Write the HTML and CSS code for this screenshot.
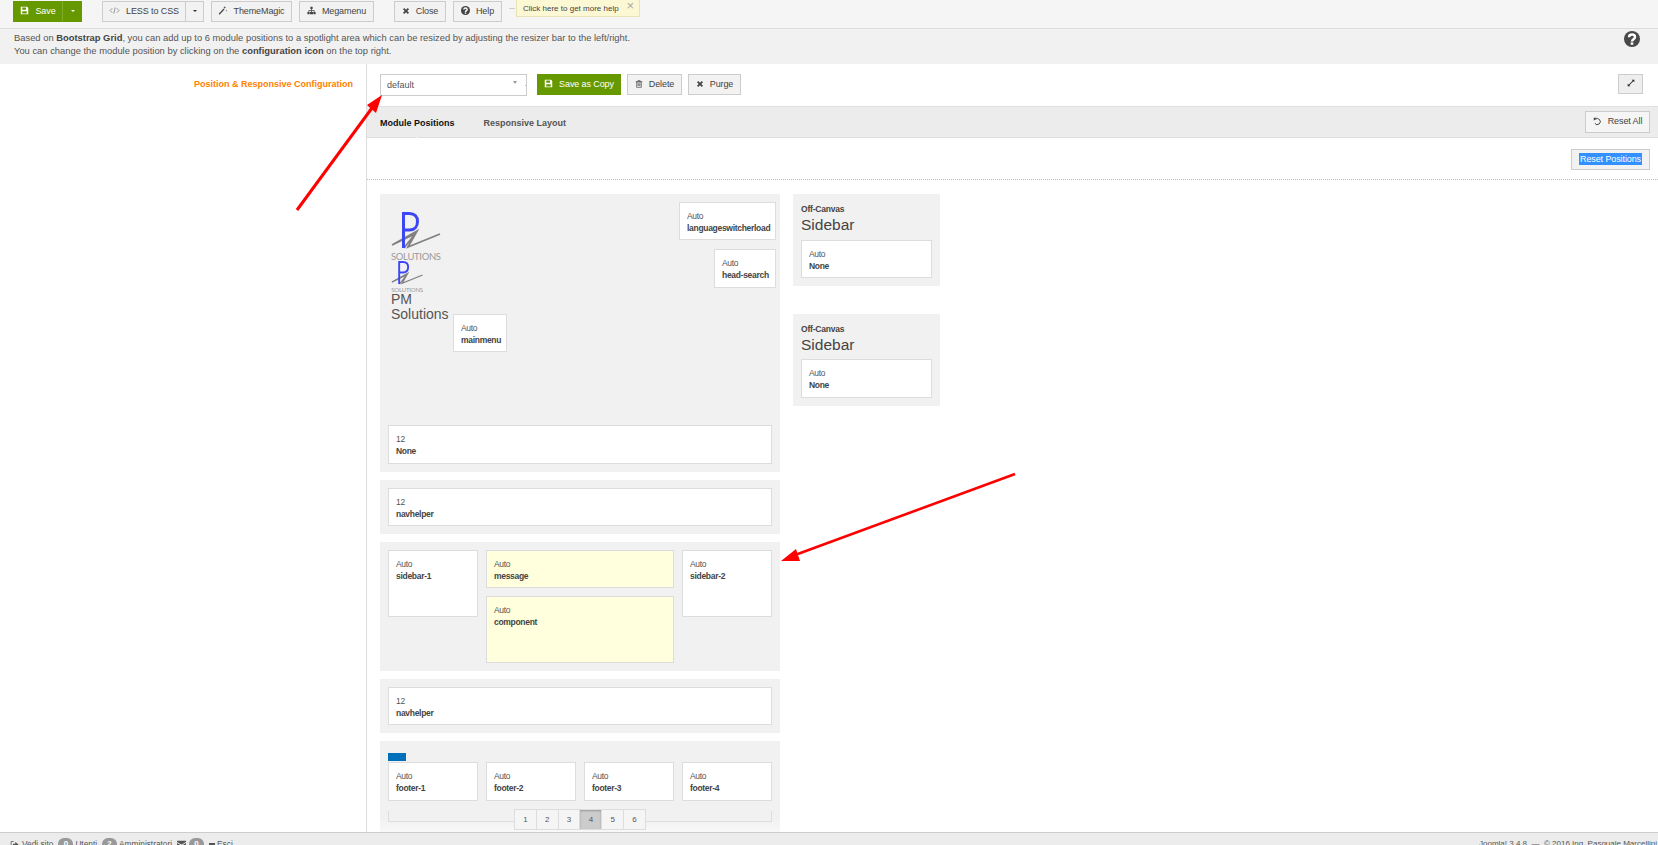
FILE: index.html
```html
<!DOCTYPE html>
<html lang="en">
<head>
<meta charset="utf-8">
<title>Template Layout</title>
<link rel="stylesheet" href="styles.css">
</head>
<body>
<svg class="defs" width="0" height="0" aria-hidden="true">
  <symbol id="i-save" viewBox="0 0 12 12"><path fill="currentColor" fill-rule="evenodd" d="M1 1h8.5L11 2.5V11H1zM3 2v3h5V2zM3 7v3h6V7z"/></symbol>
  <symbol id="i-code" viewBox="0 0 14 12"><path fill="none" stroke="currentColor" d="M4 3 1 6l3 3M10 3l3 3-3 3M8 2 6 10"/></symbol>
  <symbol id="i-wand" viewBox="0 0 12 12"><path fill="none" stroke="currentColor" stroke-width="1.6" d="M1.5 11 8 4"/><path fill="currentColor" d="M9 0l.5 1.5L11 2l-1.500.5L9 4l-.5-1.500L7 2l1.500-.5zM11 5l.3 1 .7.300-.7.300-.3 1-.3-1-.7-.3.7-.3z"/></symbol>
  <symbol id="i-map" viewBox="0 0 12 12"><path fill="currentColor" d="M4.500 1h3v3h-1v1.500H10V8h1.500v3h-3V8H9V6.500H6.500V8H8v3H4V8h1.500V6.500H3V8h.5v3h-3V8H2V5.500h3.500V4h-1z"/></symbol>
  <symbol id="i-x" viewBox="0 0 10 10"><path fill="none" stroke="currentColor" stroke-width="2.200" d="M2 2l6 6M8 2 2 8"/></symbol>
  <symbol id="i-help" viewBox="0 0 16 16"><circle cx="8" cy="8" r="8" fill="currentColor"/><path fill="none" stroke="#fff" stroke-width="2.400" d="M5 6.200C5 4.300 6.500 3.500 8 3.500c1.800 0 3 1 3 2.500 0 2.300-3 2.200-3 4.500"/><rect x="6.700" y="11.400" width="2.600" height="2.400" fill="#fff"/></symbol>
  <symbol id="i-trash" viewBox="0 0 10 12"><path fill="none" stroke="currentColor" d="M1.500 3h7v8h-7zM0 2.500h10M3.500 2.500v-2h3v2M3.500 5v4M5 5v4M6.500 5v4"/></symbol>
  <symbol id="i-expand" viewBox="0 0 12 12"><path fill="currentColor" d="M7 1h4v4L9.500 3.500 3.500 9.500 5 11H1V7l1.500 1.500 6-6z"/></symbol>
  <symbol id="i-undo" viewBox="0 0 12 12"><path fill="none" stroke="currentColor" stroke-width="1.300" d="M3 3.200A4 4 0 1 1 2.500 8.500"/><path fill="currentColor" d="M1 1h4L1 5z"/></symbol>
  <symbol id="i-out" viewBox="0 0 12 12"><path fill="none" stroke="currentColor" d="M5 2H1.500v8H5"/><path fill="currentColor" d="M4 5h3V2.500L11.500 6 7 9.500V7H4z"/></symbol>
  <symbol id="i-mail" viewBox="0 0 12 10"><path fill="currentColor" d="M0 0h12v1.500L6 5 0 1.500zM0 3l6 3.500L12 3v7H0z"/></symbol>
</svg>

<header class="topbar">
  <div class="btn-group">
    <button class="btn btn-green w-save"><svg class="ico"><use href="#i-save"/></svg>Save</button>
    <button class="btn btn-green w-caret"><span class="caret caret-white"></span></button>
  </div>
  <div class="btn-group g-less">
    <button class="btn w-less"><svg class="ico ico-wide"><use href="#i-code"/></svg>LESS to CSS</button>
    <button class="btn w-caret2"><span class="caret"></span></button>
  </div>
  <button class="btn w-magic g-tool"><svg class="ico"><use href="#i-wand"/></svg>ThemeMagic</button>
  <button class="btn w-mega g-tool"><svg class="ico"><use href="#i-map"/></svg>Megamenu</button>
  <button class="btn w-close g-close"><svg class="ico ico-sm"><use href="#i-x"/></svg>Close</button>
  <button class="btn w-help g-tool"><svg class="ico"><use href="#i-help"/></svg>Help</button>
  <div class="tip">Click here to get more help<span class="tip-x">×</span></div>
</header>

<section class="info">
  <div class="info-text">
    <p>Based on <b>Bootstrap Grid</b>, you can add up to 6 module positions to a spotlight area which can be resized by adjusting the resizer bar to the left/right.</p>
    <p>You can change the module position by clicking on the <b>configuration icon</b> on the top right.</p>
  </div>
  <svg class="info-help"><use href="#i-help"/></svg>
</section>

<main class="main">
  <aside class="side"><label class="side-label">Position &amp; Responsive Configuration</label></aside>
  <div class="content">
    <div class="row-actions">
      <div class="select">default<span class="select-arrow"></span><span class="select-dot"></span></div>
      <button class="btn btn-green w-copy"><svg class="ico"><use href="#i-save"/></svg>Save as Copy</button>
      <button class="btn w-del"><svg class="ico ico-sm"><use href="#i-trash"/></svg>Delete</button>
      <button class="btn w-purge"><svg class="ico ico-sm"><use href="#i-x"/></svg>Purge</button>
      <button class="btn btn-full"><svg class="ico-only"><use href="#i-expand"/></svg></button>
    </div>
    <nav class="tabs">
      <a class="tab tab-active">Module Positions</a>
      <a class="tab">Responsive Layout</a>
      <button class="btn w-resetall"><svg class="ico"><use href="#i-undo"/></svg>Reset All</button>
    </nav>
    <div class="row-reset">
      <button class="btn w-resetpos"><span class="selected">Reset Positions</span></button>
    </div>

    <div class="layout">
      <div class="col-main">
        <section class="panel panel-head">
          <div class="head">
            <div class="brand">
              <svg class="logo logo-lg" viewBox="0 0 51 50">
                <path class="logo-scribble" d="M1 33 26 19 17 35 49 22M1 33 24 22 13 36"/>
                <path class="logo-p" d="M12.500 36V1.500h6c5 0 8 3 8 8s-3 8.500-8 8.500h-6"/>
                <text class="logo-text" x="0" y="48" textLength="50">SOLUTIONS</text>
              </svg>
              <svg class="logo logo-sm" viewBox="0 0 51 50">
                <path class="logo-scribble" d="M1 33 26 19 17 35 49 22M1 33 24 22 13 36"/>
                <path class="logo-p" d="M12.500 36V1.500h6c5 0 8 3 8 8s-3 8.500-8 8.500h-6"/>
                <text class="logo-text" x="0" y="49" textLength="50">SOLUTIONS</text>
              </svg>
              <div class="brand-row">
                <div class="brand-name">PM<br>Solutions</div>
                <div class="box box-menu"><span class="k">Auto</span><b class="v">mainmenu</b></div>
              </div>
            </div>
            <div class="head-right">
              <div class="box box-lang"><span class="k">Auto</span><b class="v">languageswitcherload</b></div>
              <div class="box box-search"><span class="k">Auto</span><b class="v">head-search</b></div>
            </div>
          </div>
          <div class="box box-none"><span class="k">12</span><b class="v">None</b></div>
        </section>

        <section class="panel">
          <div class="box"><span class="k">12</span><b class="v">navhelper</b></div>
        </section>

        <section class="panel panel-grid">
          <div class="box box-tall"><span class="k">Auto</span><b class="v">sidebar-1</b></div>
          <div class="stack">
            <div class="box box-yellow"><span class="k">Auto</span><b class="v">message</b></div>
            <div class="box box-yellow box-tall"><span class="k">Auto</span><b class="v">component</b></div>
          </div>
          <div class="box box-tall"><span class="k">Auto</span><b class="v">sidebar-2</b></div>
        </section>

        <section class="panel">
          <div class="box"><span class="k">12</span><b class="v">navhelper</b></div>
        </section>

        <section class="panel panel-foot">
          <div class="blue-tag"></div>
          <div class="foot-boxes">
            <div class="box"><span class="k">Auto</span><b class="v">footer-1</b></div>
            <div class="box"><span class="k">Auto</span><b class="v">footer-2</b></div>
            <div class="box"><span class="k">Auto</span><b class="v">footer-3</b></div>
            <div class="box"><span class="k">Auto</span><b class="v">footer-4</b></div>
          </div>
          <div class="rail">
            <div class="pager">
              <span class="page">1</span><span class="page">2</span><span class="page">3</span><span class="page page-on">4</span><span class="page">5</span><span class="page">6</span>
            </div>
          </div>
        </section>
      </div>

      <div class="col-side">
        <section class="panel panel-off">
          <div class="off-small">Off-Canvas</div>
          <div class="off-big">Sidebar</div>
          <div class="box"><span class="k">Auto</span><b class="v">None</b></div>
        </section>
        <section class="panel panel-off">
          <div class="off-small">Off-Canvas</div>
          <div class="off-big">Sidebar</div>
          <div class="box"><span class="k">Auto</span><b class="v">None</b></div>
        </section>
      </div>
    </div>
  </div>
</main>

<footer class="status">
  <div class="status-left">
    <svg class="st-ico"><use href="#i-out"/></svg><span>Vedi sito</span>
    <span class="badge">0</span><span>Utenti</span>
    <span class="badge">2</span><span>Amministratori</span>
    <svg class="st-ico st-mail"><use href="#i-mail"/></svg>
    <span class="badge badge-mail">0</span>
    <span class="minus"></span><span>Esci</span>
  </div>
  <div class="status-right">Joomla! 3.4.8 &nbsp;—&nbsp; © 2016 Ing. Pasquale Marcellini</div>
</footer>

<svg class="arrows" viewBox="0 0 1658 845" aria-hidden="true">
  <path class="arrow-a" d="M297 210 372 108" />
  <polygon points="382,95 367,105 376,113" />
  <path d="M1015 474 795 555" />
  <polygon points="781,561 796,549 800,561" />
</svg>
</body>
</html>
```

FILE: styles.css
```css
* { box-sizing: border-box; }
html, body { margin: 0; height: 845px; overflow: hidden; }
body {
  position: relative;
  display: flex;
  flex-direction: column;
  background: #fff;
  color: #444;
  font-family: "Liberation Sans", Arial, sans-serif;
  font-size: 9px;
  line-height: 12px;
}
p { margin: 0; }
.defs { position: absolute; }

/* buttons */
.btn {
  display: inline-flex;
  align-items: center;
  justify-content: center;
  height: 21px;
  padding: 0 0 2px;
  border: 1px solid #ccc;
  background: #f2f2f2;
  color: #444;
  font: 9px/12px "Liberation Sans", Arial, sans-serif;
  letter-spacing: -0.1px;
}
.btn-green { background: #669900; border-color: #669900; color: #fff; }
.ico { width: 9px; height: 9px; margin-right: 6px; flex: none; }
.ico-wide { width: 11px; color: #777; }
.ico-sm { width: 8px; height: 8px; }
.ico-only { width: 8px; height: 8px; color: #222; }
.caret { width: 0; height: 0; border: 2.500px solid transparent; border-top-color: #333; border-bottom: 0; }
.caret-white { border-top-color: #fff; }
.btn-group { display: flex; }
.w-save { width: 50px; border-right-color: #7fae26; }
.w-caret { width: 19px; }
.w-less { width: 84px; }
.w-caret2 { width: 18px; border-left: 0; }
.w-magic { width: 81px; }
.w-mega { width: 75px; }
.w-close { width: 52px; }
.w-help { width: 49px; }
.w-copy { width: 84px; margin-left: 10px; }
.w-del { width: 55px; margin-left: 6px; }
.w-purge { width: 53px; margin-left: 6px; }
.btn-full { width: 25px; height: 20px; margin-left: auto; background: #eee; }
.w-resetall { width: 65px; height: 22px; margin-left: auto; background: #f5f5f5; }
.w-resetpos { width: 79px; margin-left: auto; }
.selected { background: #3390ff; color: #fff; padding: 0 1px; }

/* top bar */
.topbar {
  position: relative;
  display: flex;
  flex: none;
  height: 29px;
  padding: 1px 0 0 13px;
  background: #f5f5f5;
  border-bottom: 1px solid #ddd;
}
.g-less { margin-left: 20px; }
.g-tool { margin-left: 7px; }
.g-close { margin-left: 20px; }
.tip {
  position: absolute;
  left: 516px;
  top: 0;
  width: 124px;
  height: 17px;
  padding: 3px 0 0 6px;
  background: #fcf8d4;
  border: 1px solid #e9e3b4;
  border-top: 0;
  font-size: 8px;
  color: #444;
  white-space: nowrap;
}
.tip::before {
  content: "";
  position: absolute;
  left: -8px;
  top: 8px;
  width: 6px;
  height: 1px;
  background: #ccc;
}
.tip-x { position: absolute; right: 5px; top: 0; font-size: 13px; color: #aaa; }

/* info bar */
.info {
  display: flex;
  flex: none;
  justify-content: space-between;
  height: 35px;
  padding: 2px 18px 0 14px;
  background: #f1f1f1;
  font-size: 9.400px;
  line-height: 13px;
  color: #555;
}
.info b { color: #444; }
.info-help { width: 16px; height: 16px; margin-top: 0; color: #484848; }

/* main */
.main {
  flex: 1;
  display: grid;
  grid-template-columns: 367px 1fr;
  min-height: 0;
  overflow: hidden;
}
.side { border-right: 1px solid #ddd; text-align: right; padding: 14px 13px 0 0; }
.side-label { color: #ff8000; font-weight: bold; font-size: 9px; }
.content { min-width: 0; }
.row-actions { display: flex; align-items: flex-start; height: 42px; padding: 10px 15px 0 13px; }
.select {
  position: relative;
  width: 147px;
  height: 22px;
  padding: 4px 0 0 6px;
  border: 1px solid #ccc;
  color: #555;
  font-size: 9px;
}
.select-arrow {
  position: absolute;
  right: 9px;
  top: 6px;
  border: 2.500px solid transparent;
  border-top: 3px solid #999;
  border-bottom: 0;
}
.select-dot { position: absolute; right: 0; top: 10px; width: 1px; height: 1px; background: #bbb; }

.tabs {
  position: relative;
  display: flex;
  align-items: center;
  height: 32px;
  padding: 0 8px 0 13px;
  background: #ececec;
  border-top: 1px solid #e0e0e0;
  border-bottom: 1px solid #ddd;
}
.tab { font-weight: bold; color: #555; font-size: 9px; padding-top: 2px; }
.tab-active { position: relative; color: #111; margin-right: 29px; }
.tab-active::after {
  content: "";
  position: absolute;
  left: 34px;
  top: 22px;
  border: 3px solid transparent;
  border-bottom-color: #fff;
  border-top: 0;
}
.row-reset {
  display: flex;
  height: 42px;
  padding: 11px 8px 0 0;
  border-bottom: 1px dotted #bbb;
}

/* layout */
.layout {
  display: grid;
  grid-template-columns: 400px 147px;
  gap: 13px;
  padding: 14px 0 0 13px;
}
.panel { background: #f1f1f1; padding: 8px; margin-bottom: 8px; }
.box {
  display: block;
  height: 38px;
  padding: 7px 7px 0 7px;
  background: #fff;
  border: 1px solid #ddd;
}
.k { display: block; color: #555; font-size: 8.500px; letter-spacing: -0.3px; }
.v { display: block; color: #444; font-size: 8.500px; letter-spacing: -0.3px; white-space: nowrap; }
.box-tall { height: 67px; }
.box-yellow { background: #ffffdd; }
.box-none { height: 39px; }

.panel-head { display: flex; flex-direction: column; height: 278px; }
.head { flex: 1; display: flex; justify-content: space-between; }
.brand { padding: 10px 0 0 3px; }
.logo { display: block; }
.logo-lg { width: 51px; height: 50px; }
.logo-sm { width: 33px; height: 32px; margin-top: -1px; }
.logo-p { fill: none; stroke: #3d46f5; stroke-width: 3; }
.logo-scribble { fill: none; stroke: #808080; stroke-width: 1.800; }
.logo-text { fill: #9a9a9a; font-size: 9.500px; font-family: "Lato", "Liberation Sans", sans-serif; }
.brand-row { display: flex; margin-top: -1px; }
.brand-name { width: 62px; font-size: 14px; line-height: 15px; color: #555; }
.box-menu { width: 54px; margin-top: 22px; }
.head-right { display: flex; flex-direction: column; align-items: flex-end; margin-right: -4px; }
.box-lang { width: 97px; }
.box-search { width: 62px; height: 39px; margin-top: 9px; }

.panel-grid { display: grid; grid-template-columns: 90px 188px 90px; gap: 8px; height: 129px; align-items: start; }
.stack { display: flex; flex-direction: column; gap: 8px; }

.panel-foot {
  height: 100px;
  padding-top: 12px;
  margin-bottom: 0;
  background: linear-gradient(#f1f1f1 78px, #f8f8f8 91px);
}
.blue-tag { width: 18px; height: 8px; background: #0070ba; margin-bottom: 1px; }
.foot-boxes { display: grid; grid-template-columns: repeat(4, 90px); gap: 8px; }
.foot-boxes .box { height: 39px; }
.rail {
  position: relative;
  height: 11px;
  margin-top: 10px;
  border: 1px solid #ddd;
  border-top: 0;
}
.pager {
  position: absolute;
  left: 125px;
  top: -2px;
  display: flex;
  width: 132px;
  height: 21px;
  border: 1px solid #ddd;
  background: #f5f5f5;
}
.page {
  flex: 1;
  text-align: center;
  line-height: 19px;
  font-size: 8px;
  color: #555;
  border-right: 1px solid #ddd;
}
.page:last-child { border-right: 0; }
.page-on { background: #ccc; box-shadow: inset 0 1px 2px #999; }

.panel-off { height: 92px; margin-bottom: 28px; }
.off-small { padding-top: 1px; font-weight: bold; font-size: 8.500px; letter-spacing: -0.2px; line-height: 13px; color: #444; }
.off-big { font-size: 15.500px; line-height: 18px; margin-bottom: 6px; color: #444; }
.panel-off + .panel-off .box { height: 39px; margin-top: -1px; }

/* status bar */
.status {
  flex: none;
  display: flex;
  justify-content: space-between;
  height: 13px;
  padding: 5px 1px 0 10px;
  overflow: hidden;
  background: #ececec;
  border-top: 1px solid #ccc;
  font-size: 8.300px;
  line-height: 12px;
  color: #555;
}
.status-left { display: flex; align-items: center; height: 12px; gap: 2px; }
.status-right { font-size: 8px; }
.st-ico { width: 9px; height: 9px; margin-right: 1px; color: #555; }
.st-mail { margin-left: 3px; }
.badge {
  display: inline-block;
  width: 15px;
  height: 12px;
  margin-left: 3px;
  border-radius: 7px;
  background: #999;
  color: #fff;
  text-align: center;
  font-weight: bold;
  font-size: 8px;
}
.badge-mail { margin-left: 0; }
.minus { width: 6px; height: 2px; margin-left: 3px; background: #555; }

/* annotation arrows */
.arrows { position: absolute; left: 0; top: 0; width: 1658px; height: 845px; pointer-events: none; }
.arrows path { fill: none; stroke: #ff0000; stroke-width: 2.600; }
.arrows .arrow-a { stroke-width: 3; }
.arrows polygon { fill: #ff0000; }
```
